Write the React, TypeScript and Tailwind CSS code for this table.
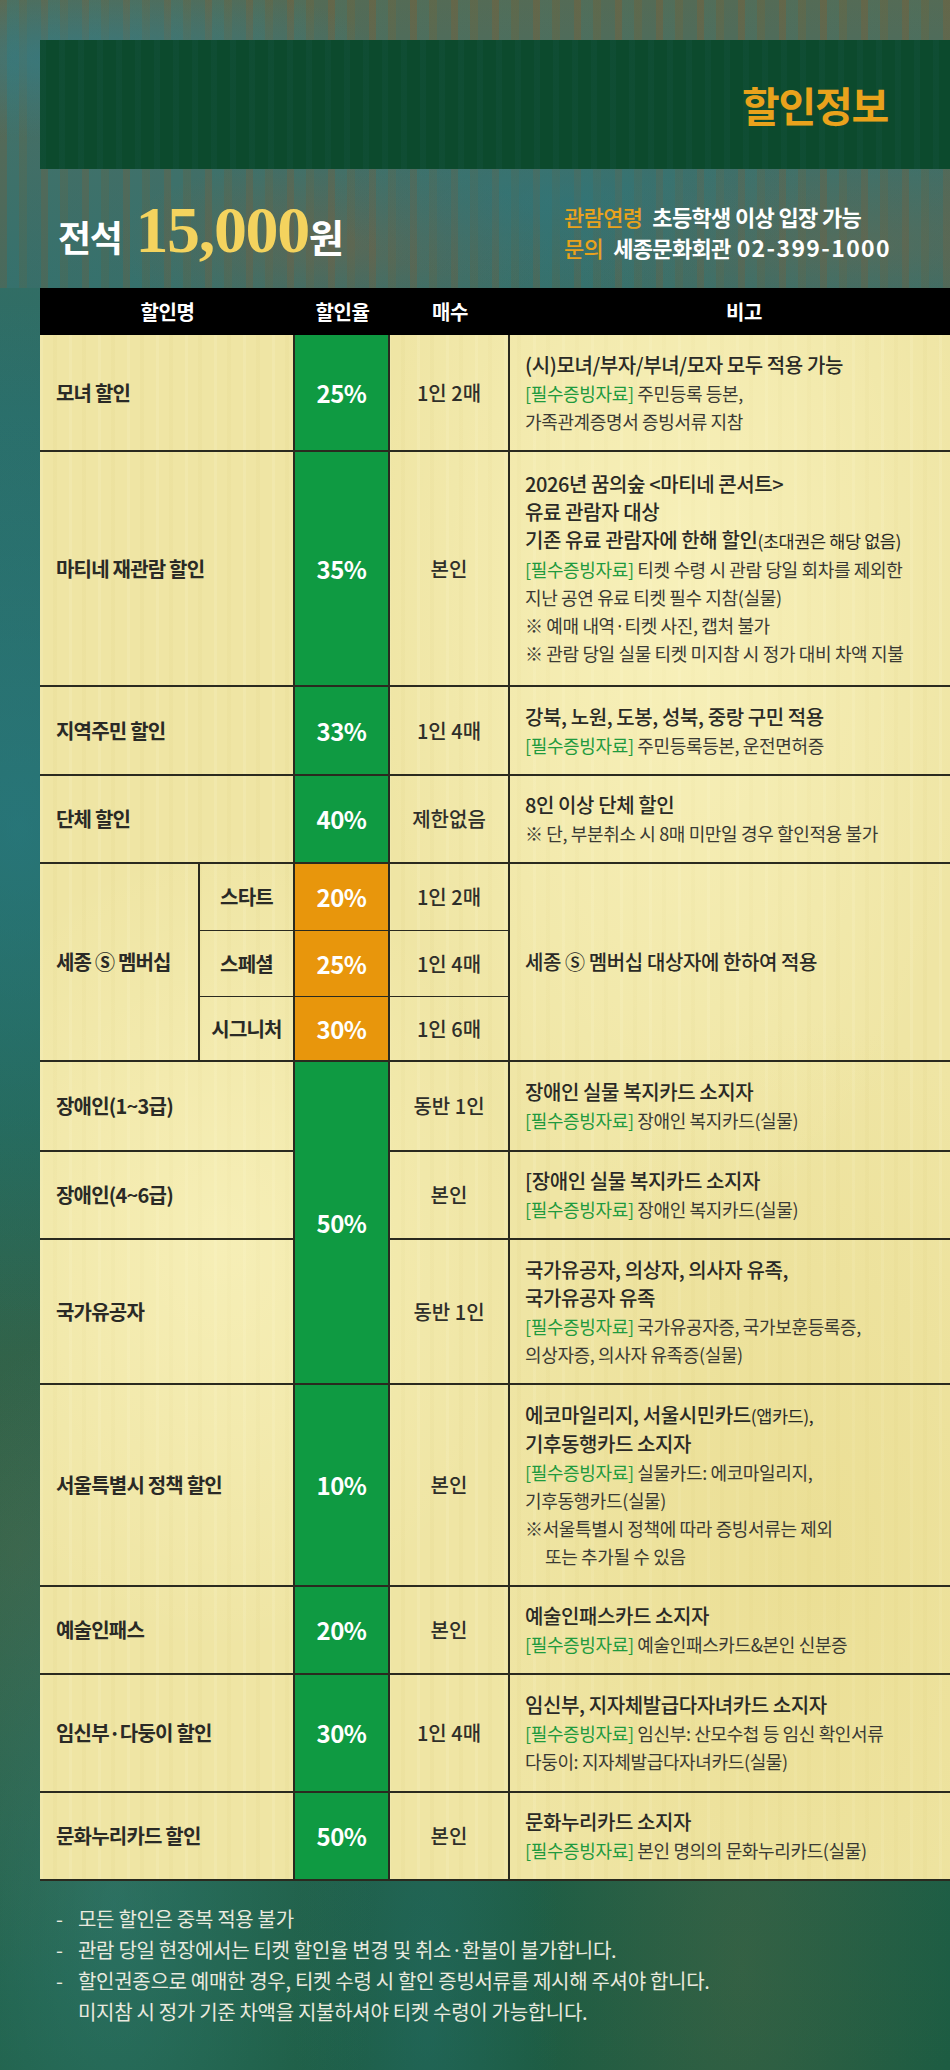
import type { ReactNode } from "react";

type Line = { label?: boolean; text: string; small?: string; indent?: boolean };

type Row = {
  name: string;
  rate?: string;
  count: string;
  main: { text: string; small?: string }[];
  sub: Line[];
};

const B = "border-[#2a2a1f]";

const mainCls =
  "text-[20px] font-medium leading-[28px] text-[#2a2a26] tracking-[-0.02em] whitespace-nowrap";
const subCls =
  "text-[18px] leading-[28px] text-[#3a3a34] tracking-[-0.02em] whitespace-nowrap";

function Note({ main, sub }: { main: Row["main"]; sub: Line[] }) {
  return (
    <div className={`border-b-2 ${B} flex flex-col justify-center pl-[15px]`}>
      {main.map((m, i) => (
        <div key={i} className={mainCls}>
          {m.text}
          {m.small && <span className="text-[17.5px] font-normal">{m.small}</span>}
        </div>
      ))}
      {sub.map((s, i) => (
        <div key={i} className={`${subCls} ${s.indent ? "pl-[20px]" : ""}`}>
          {s.label && <span className="text-[#1f9a3e]">[필수증빙자료] </span>}
          {s.text}
        </div>
      ))}
    </div>
  );
}

function Name({ children }: { children: ReactNode }) {
  return (
    <div
      className={`col-span-2 border-r-2 border-b-2 ${B} flex items-center pl-[16px] text-[20px] font-bold text-[#2a2a26] tracking-[-0.04em] whitespace-nowrap`}
    >
      {children}
    </div>
  );
}

function Rate({ children, orange, thin, span }: { children: ReactNode; orange?: boolean; thin?: boolean; span?: boolean }) {
  return (
    <div
      className={`border-r-2 ${thin ? "border-b" : "border-b-2"} ${B} ${
        orange ? "bg-[#e8960c]" : "bg-[#0f9a42]"
      } ${span ? "row-span-3" : ""} flex items-center justify-center text-white text-[24px] font-bold tracking-[-0.02em]`}
    >
      {children}
    </div>
  );
}

function Count({ children, thin }: { children: ReactNode; thin?: boolean }) {
  return (
    <div
      className={`border-r-2 ${thin ? "border-b" : "border-b-2"} ${B} flex items-center justify-center text-[20px] font-medium text-[#2f2f2a] whitespace-nowrap`}
    >
      {children}
    </div>
  );
}

const topRows: Row[] = [
  {
    name: "모녀 할인",
    rate: "25%",
    count: "1인 2매",
    main: [{ text: "(시)모녀/부자/부녀/모자 모두 적용 가능" }],
    sub: [
      { label: true, text: "주민등록 등본," },
      { text: "가족관계증명서 증빙서류 지참" },
    ],
  },
  {
    name: "마티네 재관람 할인",
    rate: "35%",
    count: "본인",
    main: [
      { text: "2026년 꿈의숲 <마티네 콘서트>" },
      { text: "유료 관람자 대상" },
      { text: "기존 유료 관람자에 한해 할인", small: "(초대권은 해당 없음)" },
    ],
    sub: [
      { label: true, text: "티켓 수령 시 관람 당일 회차를 제외한" },
      { text: "지난 공연 유료 티켓 필수 지참(실물)" },
      { text: "※ 예매 내역·티켓 사진, 캡처 불가" },
      { text: "※ 관람 당일 실물 티켓 미지참 시 정가 대비 차액 지불" },
    ],
  },
  {
    name: "지역주민 할인",
    rate: "33%",
    count: "1인 4매",
    main: [{ text: "강북, 노원, 도봉, 성북, 중랑 구민 적용" }],
    sub: [{ label: true, text: "주민등록등본, 운전면허증" }],
  },
  {
    name: "단체 할인",
    rate: "40%",
    count: "제한없음",
    main: [{ text: "8인 이상 단체 할인" }],
    sub: [{ text: "※ 단, 부분취소 시 8매 미만일 경우 할인적용 불가" }],
  },
];

const disabledRows: Row[] = [
  {
    name: "장애인(1~3급)",
    count: "동반 1인",
    main: [{ text: "장애인 실물 복지카드 소지자" }],
    sub: [{ label: true, text: "장애인 복지카드(실물)" }],
  },
  {
    name: "장애인(4~6급)",
    count: "본인",
    main: [{ text: "[장애인 실물 복지카드 소지자" }],
    sub: [{ label: true, text: "장애인 복지카드(실물)" }],
  },
  {
    name: "국가유공자",
    count: "동반 1인",
    main: [{ text: "국가유공자, 의상자, 의사자 유족," }, { text: "국가유공자 유족" }],
    sub: [
      { label: true, text: "국가유공자증, 국가보훈등록증," },
      { text: "의상자증, 의사자 유족증(실물)" },
    ],
  },
];

const bottomRows: Row[] = [
  {
    name: "서울특별시 정책 할인",
    rate: "10%",
    count: "본인",
    main: [
      { text: "에코마일리지, 서울시민카드", small: "(앱카드)," },
      { text: "기후동행카드 소지자" },
    ],
    sub: [
      { label: true, text: "실물카드: 에코마일리지," },
      { text: "기후동행카드(실물)" },
      { text: "※서울특별시 정책에 따라 증빙서류는 제외" },
      { text: "또는 추가될 수 있음", indent: true },
    ],
  },
  {
    name: "예술인패스",
    rate: "20%",
    count: "본인",
    main: [{ text: "예술인패스카드 소지자" }],
    sub: [{ label: true, text: "예술인패스카드&본인 신분증" }],
  },
  {
    name: "임신부·다둥이 할인",
    rate: "30%",
    count: "1인 4매",
    main: [{ text: "임신부, 지자체발급다자녀카드 소지자" }],
    sub: [
      { label: true, text: "임신부: 산모수첩 등 임신 확인서류" },
      { text: "다둥이: 지자체발급다자녀카드(실물)" },
    ],
  },
  {
    name: "문화누리카드 할인",
    rate: "50%",
    count: "본인",
    main: [{ text: "문화누리카드 소지자" }],
    sub: [{ label: true, text: "본인 명의의 문화누리카드(실물)" }],
  },
];

const members = [
  { tier: "스타트", rate: "20%", count: "1인 2매" },
  { tier: "스페셜", rate: "25%", count: "1인 4매" },
  { tier: "시그니처", rate: "30%", count: "1인 6매" },
];

function PlainRow({ row }: { row: Row }) {
  return (
    <>
      <Name>{row.name}</Name>
      <Rate>{row.rate}</Rate>
      <Count>{row.count}</Count>
      <Note main={row.main} sub={row.sub} />
    </>
  );
}

export default function App() {
  return (
    <div className="w-[950px] h-[2070px] overflow-hidden font-['Noto_Sans_CJK_KR','Noto_Sans',sans-serif] antialiased bg-[#236249] bg-[image:radial-gradient(ellipse_at_12%_92%,rgba(60,140,140,0.4)_0%,transparent_22%),radial-gradient(ellipse_at_78%_95%,rgba(130,110,70,0.22)_0%,transparent_20%),radial-gradient(ellipse_at_45%_97%,rgba(40,120,130,0.3)_0%,transparent_18%),radial-gradient(ellipse_at_2%_40%,rgba(40,130,150,0.5)_0%,transparent_30%),radial-gradient(ellipse_at_2%_75%,rgba(110,100,60,0.35)_0%,transparent_20%),linear-gradient(180deg,#3f6e62_0%,#2b6d66_20%,#256550_55%,#1d5c42_100%)]">
      {/* Top: header band + price */}
      <section className="h-[288px] pt-[40px] pl-[40px] bg-[#3f6d62] bg-[image:radial-gradient(ellipse_at_8%_20%,rgba(40,130,150,0.55)_0%,transparent_25%),radial-gradient(ellipse_at_60%_70%,rgba(40,120,130,0.45)_0%,transparent_30%),radial-gradient(ellipse_at_35%_85%,rgba(135,95,60,0.4)_0%,transparent_25%),radial-gradient(ellipse_at_90%_85%,rgba(130,100,65,0.35)_0%,transparent_25%),repeating-linear-gradient(90deg,rgba(125,92,58,0.22)_0px,rgba(125,92,58,0.22)_7px,rgba(38,125,135,0.2)_7px,rgba(38,125,135,0.2)_19px,rgba(100,100,70,0.18)_19px,rgba(100,100,70,0.18)_27px,rgba(48,112,118,0.2)_27px,rgba(48,112,118,0.2)_41px),linear-gradient(180deg,#5d6a4e_0%,#476e62_50%,#3a6e66_100%)]">
        <div className="h-[129px] bg-[#0c4a2d] bg-[image:repeating-linear-gradient(90deg,rgba(30,90,80,0.18)_0px,rgba(30,90,80,0.18)_6px,transparent_6px,transparent_19px)] flex items-center justify-end pr-[62px]">
          <h1 className="text-[41px] font-semibold text-[#e9a21c] tracking-[-0.03em]">할인정보</h1>
        </div>

        <div className="h-[119px] flex items-center">
          <div className="w-[524px] pl-[18px] flex items-baseline pt-[4px]">
            <span className="text-[36px] font-bold text-white tracking-[-0.04em] mr-[14px]">전석</span>
            <span className="font-['Liberation_Serif',serif] text-[66px] font-bold text-[#f4d35e] tracking-[-0.02em] leading-none">
              15,000
            </span>
            <span className="text-[38px] font-bold text-white">원</span>
          </div>
          <div className="flex flex-col text-[22px] leading-[31px] pt-[6px]">
            <div className="whitespace-nowrap tracking-[-0.03em]">
              <span className="text-[#e9a21c] font-medium">관람연령</span>
              <span className="ml-[10px] text-white font-bold">초등학생 이상 입장 가능</span>
            </div>
            <div className="whitespace-nowrap">
              <span className="text-[#e9a21c] font-medium tracking-[-0.03em]">문의</span>
              <span className="ml-[10px] text-white font-bold tracking-[-0.03em]">세종문화회관</span>
              <span className="ml-[6px] text-white font-bold text-[23px] tracking-[0.06em]">02-399-1000</span>
            </div>
          </div>
        </div>
      </section>

      {/* Discount table */}
      <div className="pl-[40px]">
        <div className="grid grid-cols-[160px_95px_95px_120px_440px] grid-rows-[47px_117px_235px_89px_88px_67px_66px_65px_90px_88px_145px_202px_88px_118px_88px] bg-[#efe5a4] bg-[image:radial-gradient(ellipse_at_70%_20%,rgba(255,250,205,0.55)_0%,transparent_35%),radial-gradient(ellipse_at_20%_60%,rgba(255,250,205,0.45)_0%,transparent_30%),radial-gradient(ellipse_at_85%_80%,rgba(230,215,130,0.45)_0%,transparent_30%),repeating-linear-gradient(90deg,rgba(255,255,230,0.12)_0px,rgba(255,255,230,0.12)_3px,transparent_3px,transparent_13px,rgba(215,200,120,0.1)_13px,rgba(215,200,120,0.1)_17px,transparent_17px,transparent_29px)]">
          {/* header */}
          <div className="col-span-2 bg-black text-white text-[20px] font-bold flex items-center justify-center tracking-[-0.02em]">
            할인명
          </div>
          <div className="bg-black text-white text-[20px] font-bold flex items-center justify-center tracking-[-0.02em]">
            할인율
          </div>
          <div className="bg-black text-white text-[20px] font-bold flex items-center justify-center tracking-[-0.02em]">
            매수
          </div>
          <div className="bg-black text-white text-[20px] font-bold flex items-center justify-center pl-[28px] tracking-[-0.02em]">
            비고
          </div>

          {topRows.map((r) => (
            <PlainRow key={r.name} row={r} />
          ))}

          {/* Sejong membership */}
          <div
            className={`row-span-3 border-r-2 border-b-2 ${B} flex items-center pl-[16px] text-[20px] font-bold text-[#2a2a26] tracking-[-0.04em] whitespace-nowrap`}
          >
            세종 Ⓢ 멤버십
          </div>
          {members.map((m, i) => (
            <MemberRow key={m.tier} {...m} first={i === 0} thin={i < 2} />
          ))}

          {/* 50% group */}
          {disabledRows.map((r, i) => (
            <DisabledRow key={r.name} row={r} first={i === 0} />
          ))}

          {bottomRows.map((r) => (
            <PlainRow key={r.name} row={r} />
          ))}
        </div>
      </div>

      {/* Footnotes */}
      <div className="pt-[22px] pl-[56px] text-[20px] leading-[31px] text-[#e9e9df] tracking-[-0.015em]">
        <div className="flex">
          <span className="w-[22px]">-</span>
          <span>모든 할인은 중복 적용 불가</span>
        </div>
        <div className="flex">
          <span className="w-[22px]">-</span>
          <span>관람 당일 현장에서는 티켓 할인율 변경 및 취소·환불이 불가합니다.</span>
        </div>
        <div className="flex">
          <span className="w-[22px]">-</span>
          <span>
            할인권종으로 예매한 경우, 티켓 수령 시 할인 증빙서류를 제시해 주셔야 합니다.
            <br />
            미지참 시 정가 기준 차액을 지불하셔야 티켓 수령이 가능합니다.
          </span>
        </div>
      </div>
    </div>
  );
}

function MemberRow({
  tier,
  rate,
  count,
  first,
  thin,
}: {
  tier: string;
  rate: string;
  count: string;
  first: boolean;
  thin: boolean;
}) {
  return (
    <>
      <div
        className={`border-r-2 ${thin ? "border-b" : "border-b-2"} ${B} flex items-center justify-center text-[20px] font-bold text-[#2a2a26] tracking-[-0.04em] whitespace-nowrap`}
      >
        {tier}
      </div>
      <Rate orange thin={thin}>
        {rate}
      </Rate>
      <Count thin={thin}>{count}</Count>
      {first && (
        <div className={`row-span-3 border-b-2 ${B} flex items-center pl-[15px]`}>
          <div className={mainCls}>세종 Ⓢ 멤버십 대상자에 한하여 적용</div>
        </div>
      )}
    </>
  );
}

function DisabledRow({ row, first }: { row: Row; first: boolean }) {
  return (
    <>
      <Name>{row.name}</Name>
      {first && <Rate span>50%</Rate>}
      <Count>{row.count}</Count>
      <Note main={row.main} sub={row.sub} />
    </>
  );
}
